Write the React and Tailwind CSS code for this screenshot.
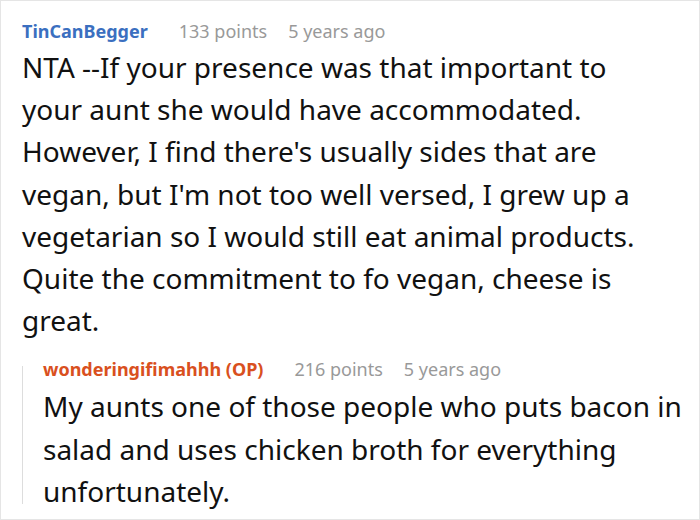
const comments = {
  parent: {
    author: 'TinCanBegger',
    points: '133 points',
    age: '5 years ago',
    body: "NTA --If your presence was that important to your aunt she would have accommodated. However, I find there's usually sides that are vegan, but I'm not too well versed, I grew up a vegetarian so I would still eat animal products. Quite the commitment to fo vegan, cheese is great.",
  },
  reply: {
    author: 'wonderingifimahhh (OP)',
    points: '216 points',
    age: '5 years ago',
    body: 'My aunts one of those people who puts bacon in salad and uses chicken broth for everything unfortunately.',
  },
};

function Meta({ c, color }) {
  return (
    <div className="flex items-baseline text-[18px] leading-[24px]">
      <span className={`font-bold ${color}`}>{c.author}</span>
      <span className="ml-[31px] text-[#999999]">{c.points}</span>
      <span className="ml-[21px] text-[#999999]">{c.age}</span>
    </div>
  );
}

export default function App() {
  return (
    <div
      className="w-[700px] h-[520px] overflow-hidden border border-[#e5e5e5] bg-white pl-[21px] pr-[12px] pt-[18px]"
      style={{ fontFamily: '"Noto Sans", "Open Sans", sans-serif' }}
    >
      <Meta c={comments.parent} color="text-[#3b6fc0]" />
      <p className="mt-[3px] max-w-[618px] text-[28px] leading-[42.2px] text-[#111111]">{comments.parent.body}</p>

      {/* reply, indented with a thread line */}
      <div className="mt-[15px] flex">
        <div className="mt-[10px] mb-[8px] w-px shrink-0 bg-[#dddddd]" />
        <div className="pl-[20px] pt-[1px]">
          <Meta c={comments.reply} color="text-[#d9501e]" />
          <p className="mt-[4px] text-[28px] leading-[42.2px] text-[#111111]">{comments.reply.body}</p>
        </div>
      </div>
    </div>
  );
}
